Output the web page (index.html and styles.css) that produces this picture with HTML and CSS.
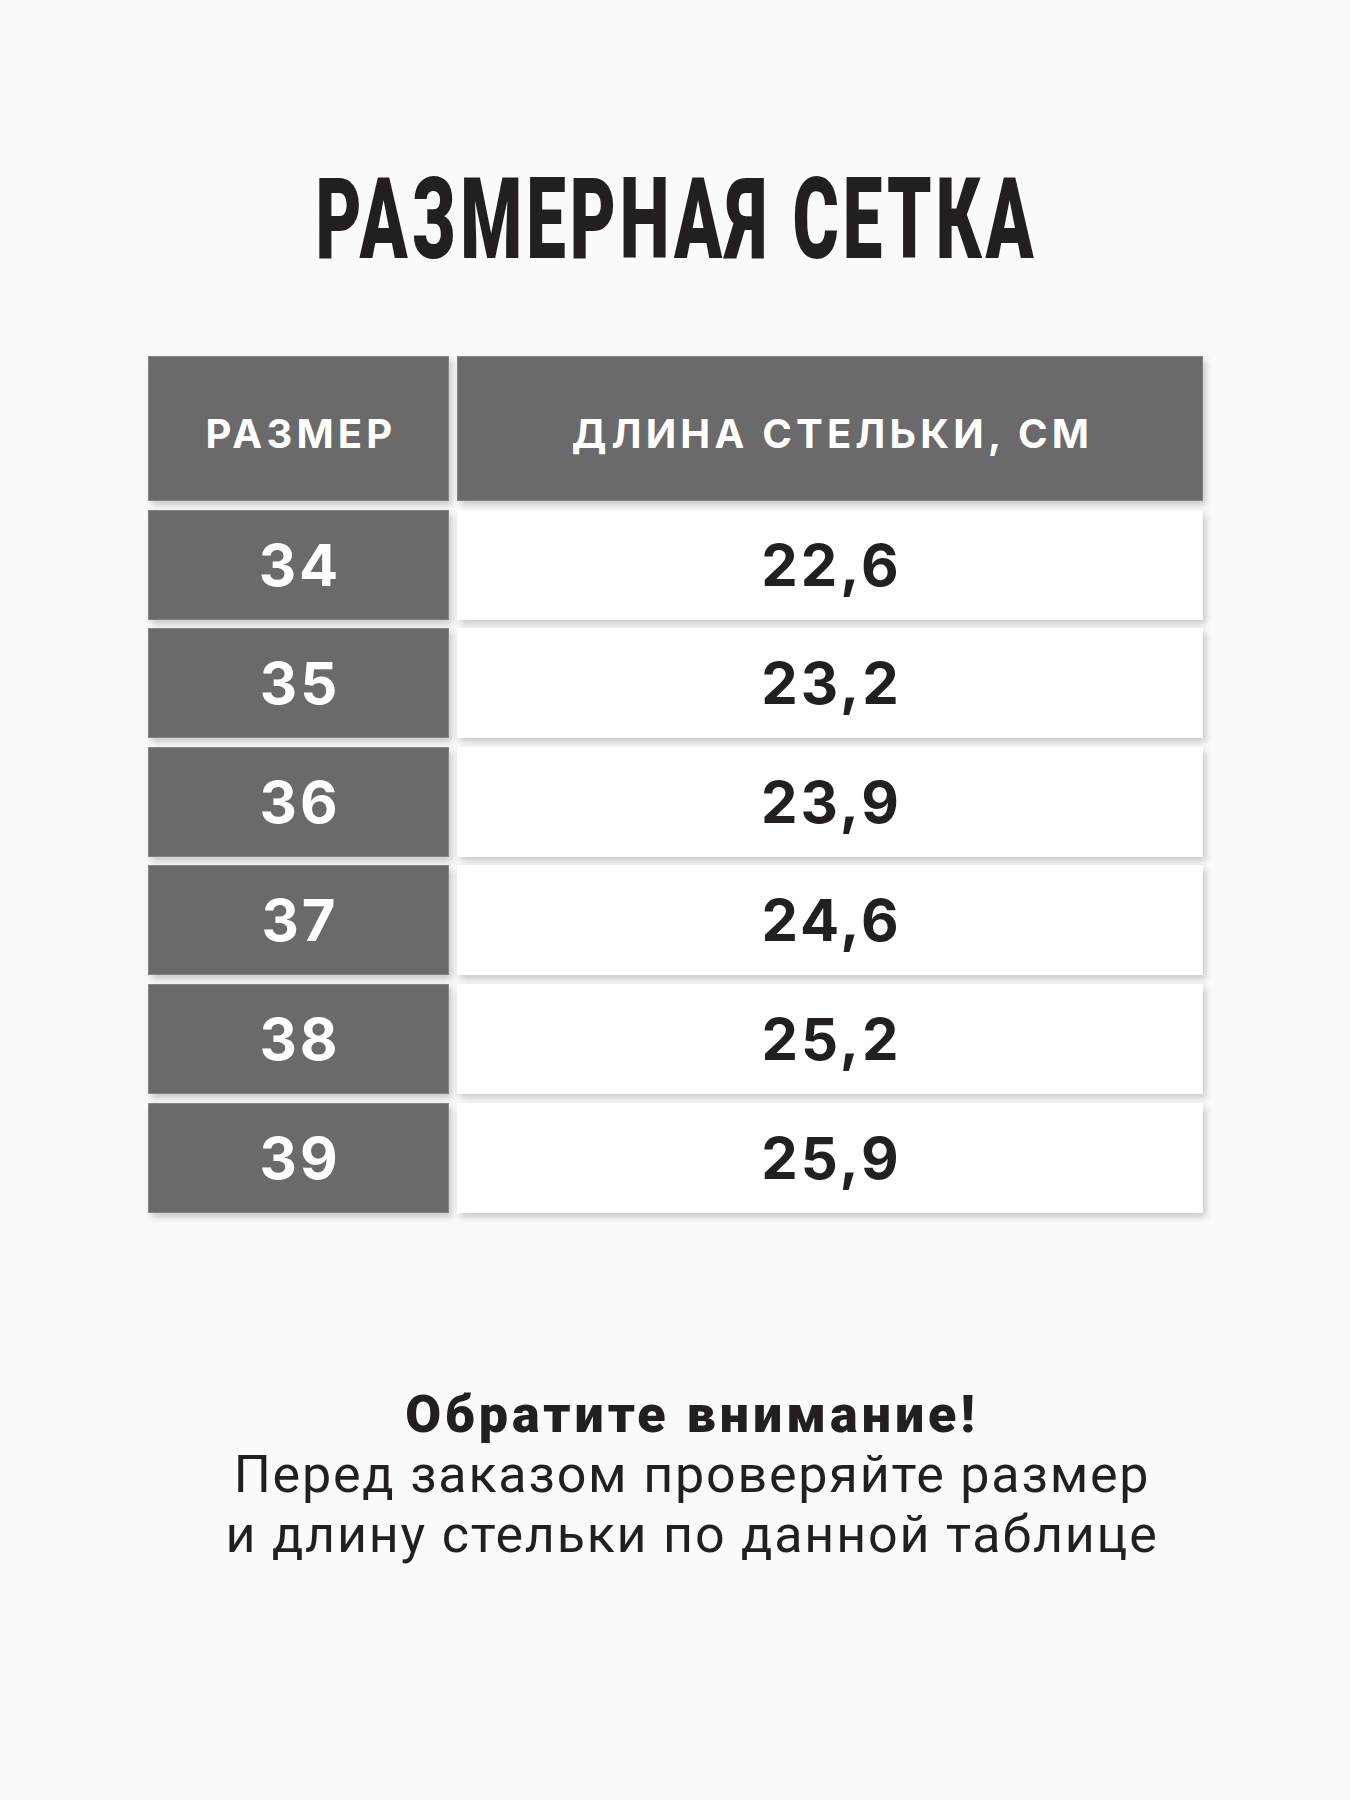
FILE: index.html
```html
<!DOCTYPE html>
<html lang="ru">
<head>
<meta charset="utf-8">
<title>Размерная сетка</title>
<link rel="stylesheet" href="styles.css">
</head>
<body>
<div class="page">
  <h1 class="title"><span class="title-text">РАЗМЕРНАЯ СЕТКА</span></h1>
  <div class="table">
    <div class="cell head">РАЗМЕР</div>
    <div class="cell head">ДЛИНА СТЕЛЬКИ, СМ</div>
    <div class="cell size">34</div><div class="cell len">22,6</div>
    <div class="cell size">35</div><div class="cell len">23,2</div>
    <div class="cell size">36</div><div class="cell len">23,9</div>
    <div class="cell size">37</div><div class="cell len">24,6</div>
    <div class="cell size">38</div><div class="cell len">25,2</div>
    <div class="cell size">39</div><div class="cell len">25,9</div>
  </div>
  <div class="note">
    <p class="note-bold">Обратите внимание!</p>
    <p class="note-line">Перед заказом проверяйте размер</p>
    <p class="note-line">и длину стельки по данной таблице</p>
  </div>
</div>
</body>
</html>
```
FILE: styles.css
```css
html, body {
  margin: 0;
  padding: 0;
  background: #fafafa;
}
.page {
  width: 1350px;
  height: 1800px;
  display: flex;
  flex-direction: column;
  align-items: stretch;
}
.title {
  margin: 162px 0 0 0;
  text-align: center;
  font-family: Roboto, "Liberation Sans", sans-serif;
  font-weight: 900;
  font-size: 114px;
  line-height: 1;
  color: #231f20;
  height: 114px;
}
.title-text {
  display: inline-block;
  transform: scaleX(0.62);
  transform-origin: center;
  letter-spacing: 6.5px;
  padding-left: 6.5px;
  white-space: nowrap;
}
.table {
  margin: 80px 0 0 148px;
  display: grid;
  grid-template-columns: 301px 746px;
  grid-template-rows: 145px repeat(6, 110px);
  column-gap: 8px;
  row-gap: 8.6px;
  width: 1055px;
}
.cell {
  display: flex;
  align-items: center;
  justify-content: center;
  font-family: Inter, "Liberation Sans", sans-serif;
  font-weight: 700;
  box-shadow: 3px 4px 7px rgba(0, 0, 0, 0.2);
  box-sizing: border-box;
}
.head {
  background: #6a6a6a;
  border: 1px solid #858585;
  color: #ffffff;
  font-size: 40px;
  letter-spacing: 4.2px;
  padding: 10px 0 0 5px;
}
.size {
  background: #6a6a6a;
  border: 1px solid #858585;
  color: #ffffff;
  font-size: 58px;
  letter-spacing: 3px;
  padding-left: 3px;
}
.len {
  background: #ffffff;
  color: #231f20;
  font-size: 58px;
  letter-spacing: 3px;
  padding-left: 3px;
}
.note {
  margin-top: 172px;
  padding-left: 34px;
  text-align: center;
  font-family: Roboto, "Liberation Sans", sans-serif;
  color: #231f20;
  font-size: 52px;
  line-height: 60px;
  letter-spacing: 1.8px;
}
.note p {
  margin: 0;
}
.note-bold {
  font-weight: 900;
  letter-spacing: 4px;
}
```
